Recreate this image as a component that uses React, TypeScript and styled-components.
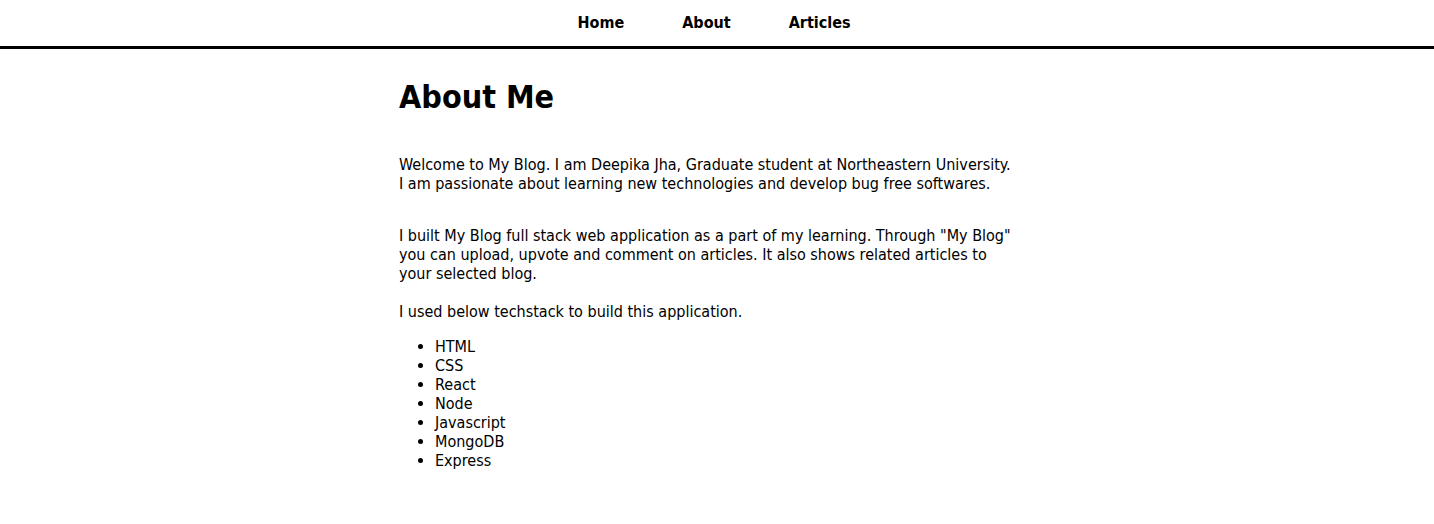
import styled, { createGlobalStyle } from "styled-components";

const GlobalStyle = createGlobalStyle`
  body {
    margin: 0;
    background: #ffffff;
    color: #000000;
    font-family: "DejaVu Sans Condensed", "DejaVu Sans", Tahoma, sans-serif;
    font-size: 16px;
    line-height: 19px;
  }
`;

const NavBar = styled.nav`
  height: 46px;
  border-bottom: 3px solid #000;
  display: flex;
  justify-content: center;
  align-items: center;
`;

const NavList = styled.ul`
  list-style: none;
  margin: 0;
  padding: 0 6px 2px 0;
  display: flex;
  gap: 58px;
`;

const NavLink = styled.a`
  color: #000;
  text-decoration: none;
  font-weight: bold;
  font-size: 16px;
`;

const Main = styled.main`
  width: 616px;
  margin: 0 auto;
  padding-top: 26px;
  padding-right: 20px;
`;

const Title = styled.h1`
  font-size: 32px;
  line-height: 45px;
  margin: 0 0 35px;
`;

const Paragraph = styled.p<{ $gap?: number }>`
  margin: 0 0 ${(p) => p.$gap ?? 16}px;
`;

const TechList = styled.ul`
  margin: 0;
  padding-left: 36px;
`;

const TECHS = ["HTML", "CSS", "React", "Node", "Javascript", "MongoDB", "Express"];

export default function App() {
  return (
    <>
      <GlobalStyle />
      <NavBar>
        <NavList>
          <li><NavLink href="#">Home</NavLink></li>
          <li><NavLink href="#">About</NavLink></li>
          <li><NavLink href="#">Articles</NavLink></li>
        </NavList>
      </NavBar>
      <Main>
        <Title>About Me</Title>
        <Paragraph $gap={33}>
          Welcome to My Blog. I am Deepika Jha, Graduate student at Northeastern University.
          <br />
          I am passionate about learning new technologies and develop bug free softwares.
        </Paragraph>
        <Paragraph $gap={19}>
          I built My Blog full stack web application as a part of my learning. Through "My Blog"
          you can upload, upvote and comment on articles. It also shows related articles to your
          selected blog.
        </Paragraph>
        <Paragraph>I used below techstack to build this application.</Paragraph>
        <TechList>
          {TECHS.map((t) => (
            <li key={t}>{t}</li>
          ))}
        </TechList>
      </Main>
    </>
  );
}
